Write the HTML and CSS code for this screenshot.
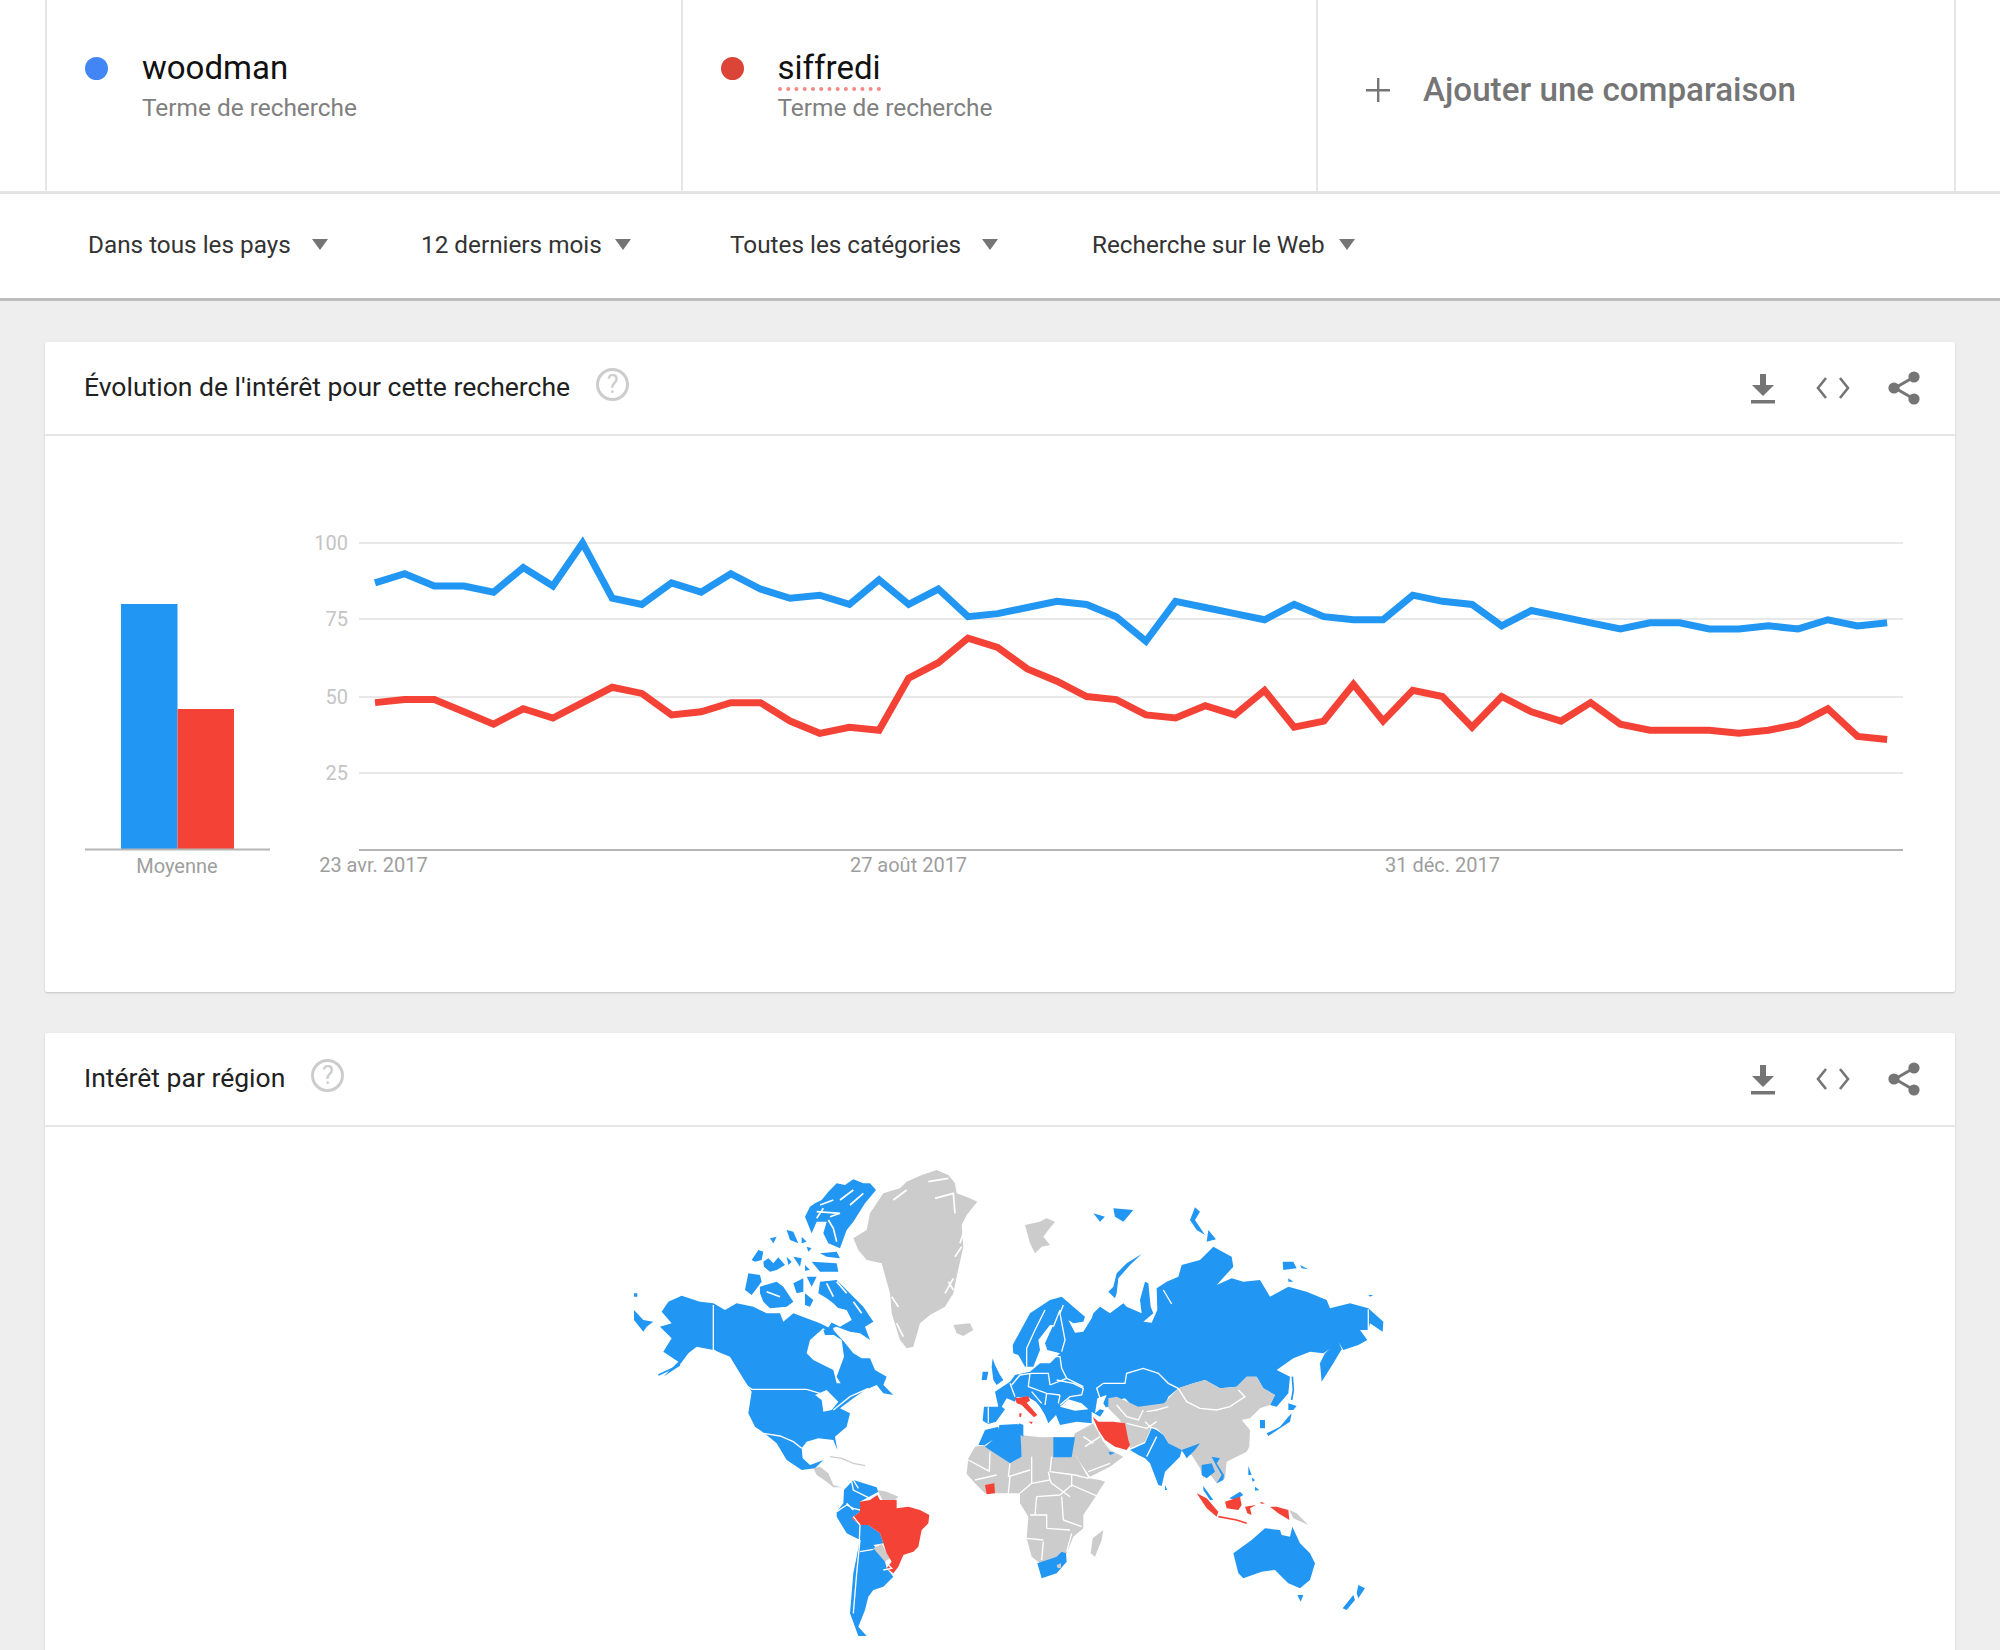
FILE: index.html
```html
<!DOCTYPE html>
<html lang="fr">
<head>
<meta charset="utf-8">
<title>Google Trends</title>
<link rel="stylesheet" href="styles.css">
</head>
<body>
<header class="terms">
  <div class="term">
    <span class="dot dot-blue"></span>
    <div class="term-text">
      <div class="term-name">woodman</div>
      <div class="term-sub">Terme de recherche</div>
    </div>
  </div>
  <div class="term">
    <span class="dot dot-red"></span>
    <div class="term-text">
      <div class="term-name"><span class="spell">siffredi</span></div>
      <div class="term-sub">Terme de recherche</div>
    </div>
  </div>
  <div class="term term-add">
    <svg class="plus" viewBox="0 0 24 24"><path d="M11 0h2.4v11H24v2.4H13.4V24H11V13.4H0V11h11z"/></svg>
    <span class="add-label">Ajouter une comparaison</span>
  </div>
</header>
<nav class="filters">
  <div class="filter f1">Dans tous les pays<span class="caret"></span></div>
  <div class="filter f2">12 derniers mois<span class="caret"></span></div>
  <div class="filter f3">Toutes les catégories<span class="caret"></span></div>
  <div class="filter f4">Recherche sur le Web<span class="caret"></span></div>
</nav>
<main class="content">
  <section class="card">
    <div class="card-head">
      <h2 class="card-title">Évolution de l'intérêt pour cette recherche</h2>
      <span class="help">?</span>
      <div class="actions">
        <svg class="ico-dl" viewBox="0 0 24 30"><path d="M9 0h6v11h8L12 22 1 11h8zM0 26h24v3.4H0z"/></svg>
        <svg class="ico-code" viewBox="0 0 34 22"><path d="M10 1 2 11l8 10M24 1l8 10-8 10"/></svg>
        <svg class="ico-share" viewBox="0 0 32 34"><path class="sl" d="M26 6 7 17l19 11"/><circle cx="26" cy="6" r="5.6"/><circle cx="6" cy="17" r="5.6"/><circle cx="26" cy="28" r="5.6"/></svg>
      </div>
    </div>
    <svg class="chart" viewBox="45 436 1910 556">
      <rect class="bar-b" x="121" y="604" width="56.500" height="245"/>
      <rect class="bar-r" x="177.500" y="709" width="56.500" height="140"/>
      <path class="base" d="M85 849.500H270M359 850H1903"/>
      <path class="grid" d="M359 543H1903M359 619H1903M359 697H1903M359 773H1903"/>
      <g class="val">
        <text x="348" y="550">100</text>
        <text x="348" y="626">75</text>
        <text x="348" y="704">50</text>
        <text x="348" y="780">25</text>
      </g>
      <g class="date">
        <text x="177" y="873">Moyenne</text>
        <text x="373.500" y="872">23 avr. 2017</text>
        <text x="908.500" y="872">27 août 2017</text>
        <text x="1442.500" y="872">31 déc. 2017</text>
      </g>
      <g transform="translate(375 850) scale(29.65 -3.07)">
        <polyline class="line-b" points="0,87 1,90 2,86 3,86 4,84 5,92 6,86 7,100 8,82 9,80 10,87 11,84 12,90 13,85 14,82 15,83 16,80 17,88 18,80 19,85 20,76 21,77 22,79 23,81 24,80 25,76 26,68 27,81 28,79 29,77 30,75 31,80 32,76 33,75 34,75 35,83 36,81 37,80 38,73 39,78 40,76 41,74 42,72 43,74 44,74 45,72 46,72 47,73 48,72 49,75 50,73 51,74"/>
        <polyline class="line-r" points="0,48 1,49 2,49 3,45 4,41 5,46 6,43 7,48 8,53 9,51 10,44 11,45 12,48 13,48 14,42 15,38 16,40 17,39 18,56 19,61 20,69 21,66 22,59 23,55 24,50 25,49 26,44 27,43 28,47 29,44 30,52 31,40 32,42 33,54 34,42 35,52 36,50 37,40 38,50 39,45 40,42 41,48 42,41 43,39 44,39 45,39 46,38 47,39 48,41 49,46 50,37 51,36"/>
      </g>
    </svg>
  </section>
  <section class="card card-map">
    <div class="card-head">
      <h2 class="card-title">Intérêt par région</h2>
      <span class="help">?</span>
      <div class="actions">
        <svg class="ico-dl" viewBox="0 0 24 30"><path d="M9 0h6v11h8L12 22 1 11h8zM0 26h24v3.4H0z"/></svg>
        <svg class="ico-code" viewBox="0 0 34 22"><path d="M10 1 2 11l8 10M24 1l8 10-8 10"/></svg>
        <svg class="ico-share" viewBox="0 0 32 34"><path class="sl" d="M26 6 7 17l19 11"/><circle cx="26" cy="6" r="5.6"/><circle cx="6" cy="17" r="5.6"/><circle cx="26" cy="28" r="5.6"/></svg>
      </div>
    </div>
    <svg class="map" viewBox="45 1127 1910 523">
      <!-- Americas and Greenland -->
      <g transform="translate(620 1150) scale(.33333)">
        <path class="m-g" d="M700 265 740 240 750 190 790 130 840 115 860 95 905 75 950 60 985 75 1005 100 1010 130 1050 145 1072 155 1040 195 1025 225 1030 290 1010 380 1000 430 975 470 930 495 900 520 880 590 860 595 840 570 815 490 810 430 785 340 740 330 715 300Z"/>
        <path class="m-g" d="M1000 525 1050 520 1060 540 1030 558 1010 550Z"/>
        <path class="m-t" d="M925 95 985 85M945 145 1000 130 1005 190M1000 385 975 430M860 120 820 150M1025 290 1005 320M1030 250 1020 280M985 395 1000 420M815 440 835 470M830 520 850 560"/>
        <path class="m-b" d="M125 485 145 455 185 437 240 455 280 460 315 480 350 460 400 470 440 490 480 490 490 515 520 490 560 505 600 520 640 540 672 575 700 610 725 625 750 625 765 660 800 680 790 705 820 735 790 730 770 705 735 720 700 745 660 775 690 790 680 830 645 860 652 900 640 870 595 865 560 875 545 895 548 925 570 945 585 940 610 930 585 955 545 960 500 930 470 880 440 855 405 830 385 790 395 725 360 670 330 620 280 600 230 590 205 610 175 650 130 680 175 635 130 605 155 565 120 530 155 520Z"/>
        <path class="m-w" d="M560 610 570 570 610 535 665 570 672 620 650 680 662 700 650 700 640 660 580 630Z"/>
        <path class="m-w" d="M585 735 620 720 655 755 635 780 610 785 605 750Z"/>
        <path class="m-l" d="M280 465V600L330 630 370 700 395 718H560L600 730M640 780 690 740 745 715M430 850 480 858 520 875 545 895M440 858 470 915"/>
        <path class="m-b" d="M585 160 605 150 625 125 650 100 675 105 700 88 730 100 750 100 768 120 735 160 700 215 680 240 660 295 625 280 610 250 620 215 590 215 575 250 555 200 570 170Z"/>
        <path class="m-t" d="M590 185 660 190 630 200M625 210 640 235 650 275M600 165 640 150M610 175 590 205M690 165 730 130M700 120 660 150"/>
        <path class="m-b" d="M395 330 415 300 430 305 425 330 405 335ZM430 335 445 325 460 340 475 322 495 345 470 360 450 365 432 350ZM500 240 520 245 535 280 510 270ZM545 260 560 275 545 280ZM575 335 650 340 655 365 600 365ZM600 310 650 305 660 325 620 320ZM555 345 570 360 555 362ZM520 320 545 325 540 350ZM450 265 470 260 460 280ZM500 320 515 335 505 345ZM560 290 575 295 565 305ZM385 370 420 375 425 395 395 435 375 420ZM420 410 470 395 490 410 520 455 500 470 450 475 430 455 420 430ZM600 395 650 390 700 440 730 470 760 515 735 530 750 570 720 550 690 545 650 530 620 540 660 480 640 460 620 445 595 430ZM520 400 550 385 550 425 530 430ZM560 380 590 380 575 410ZM555 430 580 450 570 470 555 465ZM610 540 640 530 640 555 615 555ZM42 480 70 510 100 515 80 530 70 545 42 510ZM42 430H52V440H42Z"/>
        <path class="m-w" d="M640 470 680 480 695 510 660 530 630 515Z"/>
        <path class="m-t" d="M620 400 640 440M650 395 680 430M700 455 725 490M440 425 480 440"/>
        <path class="m-bs" d="M115 675 180 645"/>
      </g>
      <g transform="translate(620 1400) scale(.33333)">
        <path class="m-g" d="M580 205 600 200 625 220 640 255 665 262 640 262 620 245 590 225Z"/>
        <path class="m-gs" d="M630 170 665 175 700 190 735 197"/>
        <path class="m-b" d="M650 335 670 310 672 270 700 240 770 262 775 275 720 305 720 335 695 355 720 375 745 375 780 400 790 430 760 435 790 465 800 505 820 530 790 560 760 570 745 590 735 630 715 680 740 708 715 708 690 640 700 520 720 420 680 400 650 350Z"/>
        <path class="m-g" d="M772 270 800 275 835 290 825 300 790 305ZM760 445 785 432 810 475 795 485Z"/>
        <path class="m-r" d="M695 355 720 335 720 305 750 300 772 285 780 300 830 300 830 325 865 320 900 330 928 345 925 370 905 390 895 440 880 455 850 465 835 500 820 520 800 505 815 485 800 460 790 430 780 400 745 375 720 375Z"/>
        <path class="m-l" d="M720 420 710 520 700 640M720 375 718 420M720 455 760 448M790 510 815 505 800 490M695 245 700 270 750 295M650 335 680 315 700 325 720 330M680 310 700 330M720 375 700 350M700 240 715 265"/>
      </g>
      <!-- Eurasia -->
      <g transform="translate(960 1150) scale(.33333)">
        <path class="m-g" d="M195 225 240 215 260 205 285 215 265 240 250 260 270 285 245 290 225 310 210 280Z"/>
        <path class="m-b" d="M305 440 345 475 375 500 370 515 340 520 325 510 345 548 370 545 395 505 400 490 420 470 450 490 490 460 500 470 545 490 540 450 555 395 565 400 572 470 580 490 550 515 575 518 592 480 590 415 620 395 655 380 665 345 720 330 760 290 815 320 820 350 770 405 815 385 850 395 900 390 930 440 985 410 1040 425 1100 450 1110 475 1170 460 1225 475 1270 515 1268 545 1230 520 1225 540 1200 540 1222 570 1195 585 1150 600 1135 575 1120 590 1090 610 1050 605 1000 625 950 660 990 680 985 730 950 770 930 765 945 735 910 715 890 680 860 680 830 710 780 715 735 690 700 700 655 715 625 740 612 770 550 772 535 785 495 745 470 750 465 775 440 770 420 800 395 785 395 820 350 815 300 825 288 795 265 820 255 795 240 770 228 755 210 745 205 740 170 742 165 755 140 745 125 770 135 778 108 815 85 822 68 812 72 770 115 770 105 725 125 712 150 695 165 675 210 665 240 640 270 640 300 610 262 600 255 580 280 525 270 525 235 570 240 600 220 650 195 650 175 615 160 610 158 585 210 490 270 450Z"/>
        <path class="m-w" d="M300 770 325 748 365 760 385 778 345 782ZM412 745 440 735 430 760 445 785 420 778 405 790Z"/>
        <path class="m-l" d="M610 420 635 462"/>
        <path class="m-b" d="M1135 572 1145 598 1120 640 1085 695 1080 640 1095 610Z"/>
        <path class="m-b" d="M545 312 500 340 470 370 460 410 445 425 465 445 470 430 475 385 510 345ZM400 190 435 200 420 215ZM460 175 520 180 490 215 465 200ZM705 172 720 185 705 210 735 255 710 240 690 210ZM745 240 768 268 740 275ZM968 335 1000 335 1010 355 970 360ZM1020 345 1045 358 1025 355ZM985 385 1000 395 985 395ZM1225 435 1240 435 1230 440ZM98 625 105 645 120 675 130 690 110 705 100 690 95 650ZM68 665 85 665 80 690 65 690Z"/>
        <path class="m-r" d="M165 745 205 738 210 752 200 758 232 795 222 802 205 785 185 765 170 760ZM205 815 218 815 215 822ZM178 790 185 790 183 802 178 800Z"/>
        <path class="m-b" d="M900 810 915 810 915 835 900 835ZM920 850 960 830 985 800 995 790 990 815 960 835 925 858ZM985 760 1010 768 1000 780 985 780Z"/>
        <path class="m-bs" d="M997 680 1000 720 995 750"/>
        <path class="m-l" d="M255 480 225 540 200 595 200 650M300 480 280 530M310 465 300 490 315 570 305 605M260 620H300L305 655 320 685 370 710M215 670H265L270 705M155 705 180 675 215 670M210 670 205 710 260 730 300 735M270 705 320 685M260 730 255 765M300 735 295 760M85 772V820M1225 478V540M290 690 340 700 370 715 365 735 330 740 300 765M655 715 625 700 595 670 550 655 500 670 495 700 430 700 410 715 420 745M150 700 165 740M215 725 245 760"/>
      </g>
      <!-- Africa, southern Asia, Oceania -->
      <g transform="translate(960 1400) scale(.33333)">
        <path class="m-g" d="M655 -35 700 -50 735 -60 780 -35 830 -40 860 -70 890 -70 910 -35 945 -15 930 15 900 25 870 55 845 60 870 90 868 140 860 155 800 185 795 235 770 250 745 215 730 235 720 205 695 165 665 155 625 130 610 105 590 85 575 80 555 125 510 145 480 60 445 25 445 -5 470 -10 535 20 612 10Z"/>
        <path class="m-l" d="M655 -35 680 5 720 25 770 30 810 20 855 -10 835 -30M470 15 500 50 535 60 550 30M560 35 590 30 625 20M500 70 560 85 590 65M555 65 575 85"/>
        <path class="m-b" d="M510 150 555 130 575 85 590 90 610 105 625 130 665 150 660 170 615 215 605 258 595 255 570 190 555 175 535 165Z"/>
        <path class="m-l" d="M560 170 590 110"/>
        <path class="m-b" d="M665 150 720 130 705 150 680 175ZM725 195 755 190 765 215 740 235 725 225ZM755 170 780 175 770 190 792 225 790 240 770 250 785 225 765 190ZM730 258 760 300 750 300 730 270ZM615 255 622 270 615 270ZM865 198 875 225 865 225ZM885 260 898 270 885 272ZM875 232 885 240 878 246ZM808 295 840 275 850 285 825 300Z"/>
        <path class="m-g" d="M20 222 25 175 45 140 75 135 150 190 185 170 180 105 240 112 345 110 350 170 385 235 420 240 435 245 400 300 370 345 370 385 340 410 320 460 240 490 215 470 200 415 205 350 180 310 180 280 145 280 105 280 75 280 50 255Z"/>
        <path class="m-g" d="M345 100 400 70 430 125 450 150 490 170 450 200 390 230 355 180 335 130Z"/>
        <path class="m-b" d="M55 135 75 90 115 80 120 105 75 135ZM75 140 115 105 118 75 180 72 185 170 150 190ZM178 70 190 75 190 110 175 100ZM280 112H345L335 172H280ZM445 155 465 158 450 165Z"/>
        <path class="m-r" d="M398 50 415 65 460 65 495 70 505 120 510 135 500 150 465 140 435 120 415 90ZM75 255 103 250 105 280 80 283Z"/>
        <path class="m-l" d="M25 180 90 215M90 155 88 215M150 190 145 230M145 230 210 210M215 170V250L270 240 265 215M275 170 270 215M270 215 345 225M345 225 385 235M335 255 415 290M275 250 330 290M230 290 300 285M210 345H260V385M200 415 250 420M250 425 245 480M305 290 310 360M310 360 365 380M260 385 330 390M335 400 320 455M145 280 150 230M180 280 215 250M45 240 110 225M375 140 420 110M385 215 450 190M370 110 400 130M230 290 225 345M335 225 335 260M270 240 275 250M300 285 335 255"/>
        <path class="m-g" d="M430 390 425 420 405 470 392 460 398 415Z"/>
        <path class="m-b" d="M232 490 290 470 305 455 318 460 320 485 290 520 245 535Z"/>
        <path class="m-g" d="M290 495 303 490 303 503 293 505Z"/>
        <path class="m-r" d="M710 280 740 295 775 335 770 350 740 325ZM795 305 840 290 845 315 835 330 800 325ZM855 320 888 315 870 325 875 345 862 340ZM930 320 950 320 985 330 988 360 955 340ZM900 305 915 310 905 312Z"/>
        <path class="m-rs" d="M775 350 830 360 860 370"/>
        <path class="m-g" d="M988 330 1010 340 1045 375 1000 355Z"/>
        <path class="m-b" d="M820 460 875 420 915 385 960 390 965 405 990 410 997 380 1020 430 1050 460 1065 490 1050 540 1020 565 985 550 965 530 945 510 905 515 850 535 835 520ZM1012 585H1030L1022 605ZM1195 555 1215 565 1195 595 1190 580ZM1180 585 1185 600 1160 630 1148 625Z"/>
      </g>
    </svg>
  </section>
</main>
</body>
</html>
```
FILE: styles.css
```css
* { box-sizing: border-box; }
html, body { margin: 0; height: 1650px; overflow: hidden; }
body { background: #eeeeee; font-family: Roboto, "Noto Sans", sans-serif; color: #212121; }

.terms { display: flex; height: 194px; padding-left: 45px; background: #fff; border-bottom: 3px solid #e4e4e4; }
.term { display: flex; width: 635.500px; padding: 48px 0 0 38px; border-left: 2px solid #e6e6e6; }
.term-add { width: 640px; padding: 0 0 12px 48px; align-items: center; border-right: 2px solid #e6e6e6; }
.dot { width: 23px; height: 23px; margin: 9px 34px 0 0; border-radius: 50%; flex: none; }
.dot-blue { background: #4285f4; }
.dot-red { background: #db4437; }
.term-name { font-size: 33px; line-height: 40px; color: #111; }
.term-sub { font-size: 24.400px; line-height: 36px; margin-top: 2px; color: #808080; }
.spell { border-bottom: 4px dotted #f78a84; }
.plus { width: 24px; height: 24px; fill: #757575; margin-right: 33px; }
.add-label { font-size: 33.200px; font-weight: 500; color: #757575; }

.filters { display: flex; align-items: center; height: 107px; padding: 0 0 4px 88px; background: #fff; border-bottom: 3px solid #bdbdbd; }
.filter { display: flex; align-items: center; font-size: 24.300px; color: #333; }
.f1 { width: 333px; }
.f2 { width: 309px; }
.f3 { width: 362px; }
.caret { width: 0; height: 0; margin-left: 21px; border-style: solid; border-width: 11px 8.500px 0; border-color: #757575 transparent transparent; }
.f2 .caret { margin-left: 13px; }
.f4 .caret { margin-left: 14px; }

.content { padding: 41px 45px 0; display: flex; flex-direction: column; gap: 41px; }
.card { background: #fff; border-radius: 2px; box-shadow: 0 1px 2px rgba(0, 0, 0, .18); }
.card-map { height: 640px; }
.card-head { display: flex; align-items: center; height: 94px; padding-left: 39px; border-bottom: 2px solid #e6e6e6; }
.card-title { margin: -4px 0 0; font-size: 26.500px; font-weight: 400; color: #212121; }
.help { width: 33px; height: 33px; margin-left: 26px; margin-top: -8px; border: 3px solid #ccc; border-radius: 50%; color: #ccc; font-size: 25px; line-height: 27px; text-align: center; }
.actions { margin-left: auto; display: flex; align-items: center; padding-right: 35px; fill: #757575; }
.ico-dl { width: 24px; height: 30px; margin-top: 2px; }
.ico-code { width: 34px; height: 22px; margin: 0 38px 0 41px; fill: none; stroke: #757575; stroke-width: 2.600; }
.ico-share { width: 32px; height: 34px; }
.sl { fill: none; stroke: #757575; stroke-width: 3; }

.chart { display: block; width: 1910px; height: 556px; }
.bar-b { fill: #2196f3; }
.bar-r { fill: #f44336; }
.base { fill: none; stroke: #b5b5b5; stroke-width: 2; }
.grid { fill: none; stroke: #e8e8e8; stroke-width: 2; }
.val text { font-size: 20px; fill: #c4c4c4; text-anchor: end; }
.date text { font-size: 20px; fill: #9e9e9e; text-anchor: middle; }
.line-b, .line-r { fill: none; stroke-width: 7; vector-effect: non-scaling-stroke; stroke-linejoin: miter; }
.line-b { stroke: #2196f3; }
.line-r { stroke: #f44336; }

.map { display: block; width: 1910px; height: 523px; }
.m-b { fill: #2196f3; }
.m-g { fill: #cccccc; }
.m-r { fill: #f44336; }
.m-w { fill: #fff; }
.m-l { fill: none; stroke: #fff; stroke-width: 4; }
.m-t { fill: none; stroke: #fff; stroke-width: 5; }
.m-bs { fill: none; stroke: #2196f3; stroke-width: 5; }
.m-gs { fill: none; stroke: #ccc; stroke-width: 4; }
.m-rs { fill: none; stroke: #f44336; stroke-width: 5; }
```
